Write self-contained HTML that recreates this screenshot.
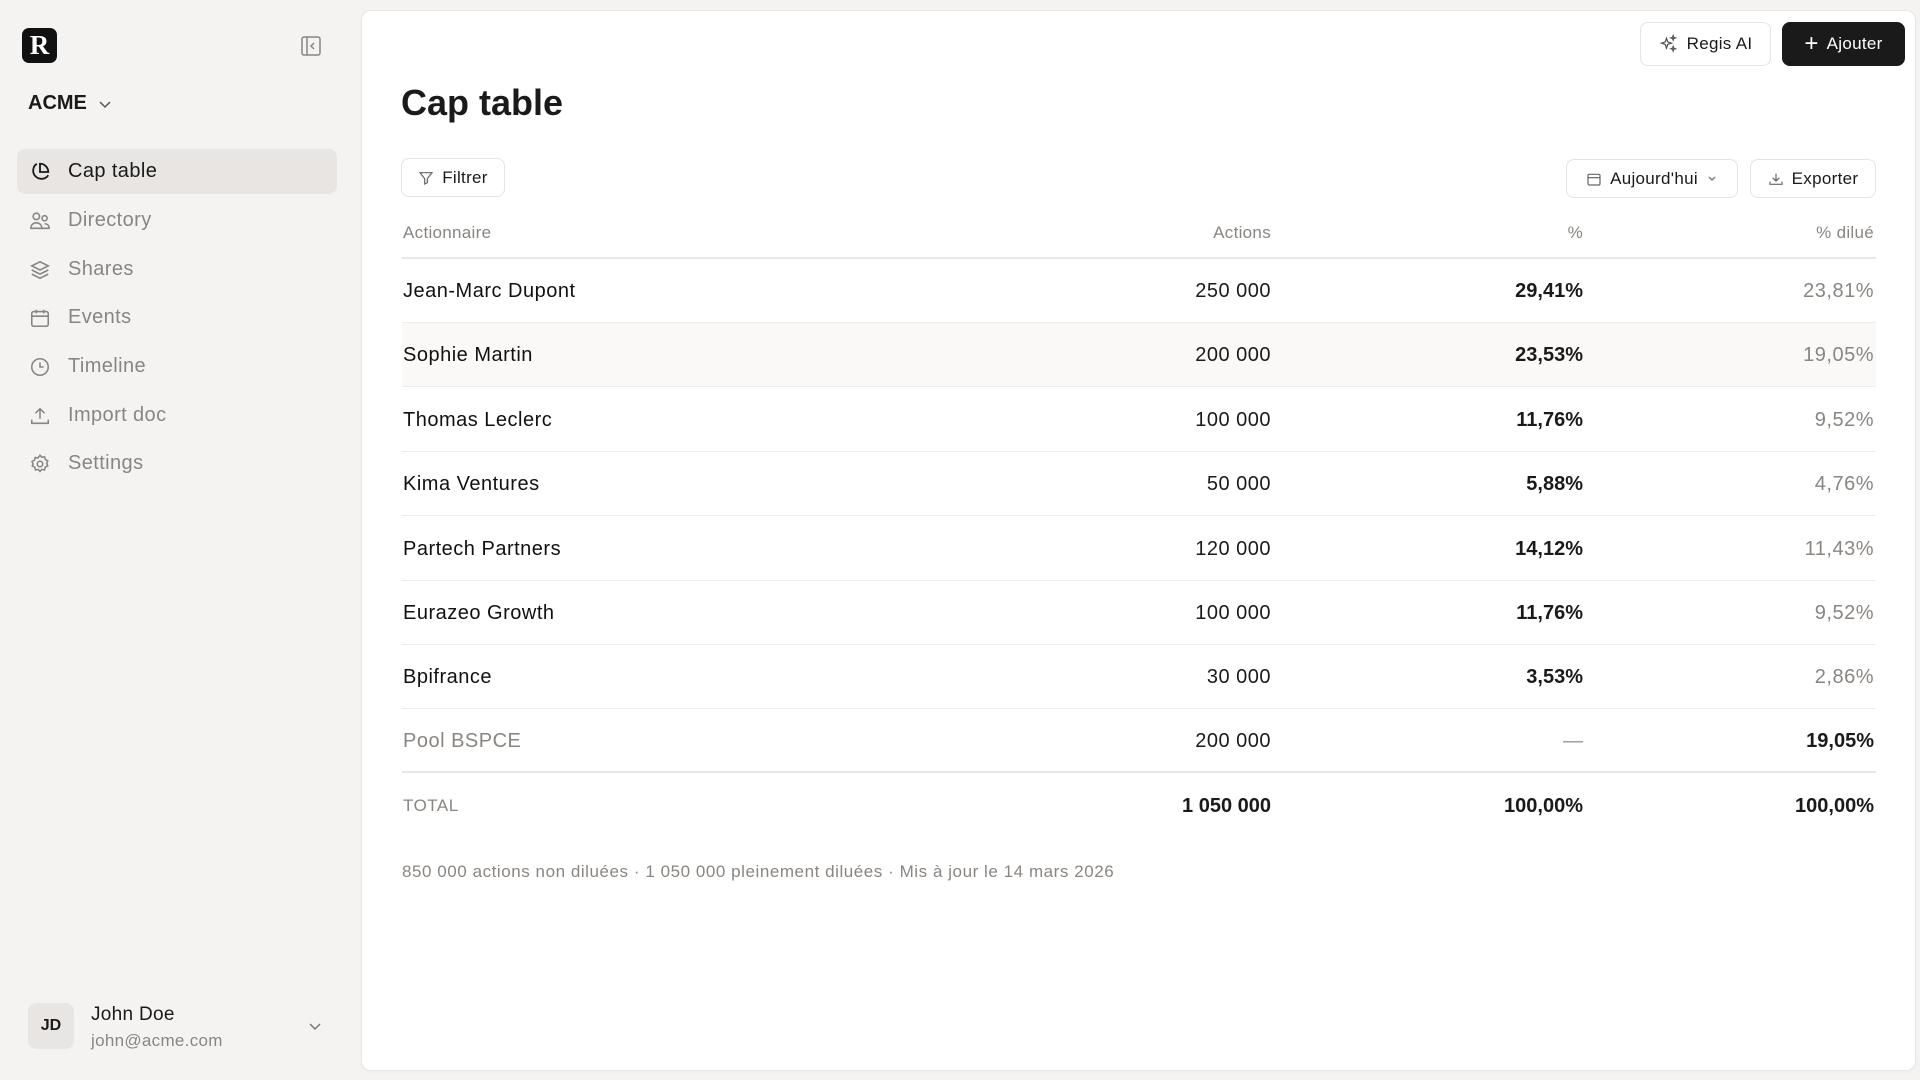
<!DOCTYPE html>
<html><head><meta charset="utf-8">
<style>
*{box-sizing:border-box;margin:0;padding:0}
body{width:1920px;height:1080px;background:#f5f3f1;font-family:"Liberation Sans",sans-serif;color:#1a1a1a;position:relative;overflow:hidden}
.abs{position:absolute}
.logo{left:22px;top:28px;width:35px;height:35px;background:#111;border-radius:7px;color:#fff;font-family:"Liberation Serif",serif;font-weight:bold;font-size:27px;text-align:center;line-height:35px}
.nav{left:17px;width:320px;height:45px;border-radius:8px;display:flex;align-items:center;font-size:20px;color:#8a8580;letter-spacing:.4px}
.nav svg{position:absolute;left:12px;top:12px}
.nav span{position:absolute;left:51px}
.nav.act{background:#e8e5e2;color:#1a1a1a}
.main{left:361px;top:10px;width:1555px;height:1061px;background:#fff;border-radius:10px;border:1px solid #e9e6e3;box-shadow:0 1px 3px rgba(0,0,0,.04)}
.btn{border:1.5px solid #e6e3e0;border-radius:8px;background:#fff;display:flex;align-items:center;justify-content:center;gap:8px;font-size:17px;color:#1a1a1a;letter-spacing:.3px}
.row{left:402px;width:1474px;height:64px;border-bottom:1.5px solid #efedeb;font-size:20px;letter-spacing:.5px}
.row div{position:absolute;top:0;line-height:64px}
.c0{left:1px;color:#111}
.c1{right:605px;text-align:right}
.c2{right:293px;text-align:right;font-weight:bold;letter-spacing:0}
.c3{right:2px;text-align:right;color:#8a8580}
</style></head><body>
<div class="abs logo">R</div>
<svg class="abs" style="left:300px;top:35px" width="22" height="22" viewBox="0 0 22 22" fill="none" stroke="#8a8580" stroke-width="1.5"><rect x="2" y="2" width="18" height="18" rx="2"/><line x1="7" y1="2" x2="7" y2="20"/><path d="M14 8l-3 3 3 3"/></svg>
<div class="abs" style="left:28px;top:92px;font-size:20px;font-weight:bold;">ACME</div>
<svg class="abs" style="left:98px;top:99px" width="14" height="10" viewBox="0 0 14 10" fill="none" stroke="#555" stroke-width="1.5"><path d="M2 3l5 5 5-5"/></svg>

<div class="abs nav act" style="top:149px"><svg width="22" height="22" viewBox="0 0 24 24" fill="none" stroke="#1a1a1a" stroke-width="2"><path d="M21 15.5A9 9 0 1 1 8.5 3"/><path d="M12 3v9h9a9 9 0 0 0-9-9z"/></svg><span>Cap table</span></div>
<div class="abs nav" style="top:198px"><svg width="22" height="22" viewBox="0 0 24 24" fill="none" stroke="#8a8580" stroke-width="1.7"><circle cx="8" cy="7" r="3.5"/><circle cx="17" cy="9" r="2.8"/><path d="M2 20c0-4 3-6 6-6s6 2 6 6z"/><path d="M13 20h9c0-3-2-5-5-5"/></svg><span>Directory</span></div>
<div class="abs nav" style="top:247px"><svg width="22" height="22" viewBox="0 0 24 24" fill="none" stroke="#8a8580" stroke-width="1.7"><path d="M12 3l9 4.5-9 4.5-9-4.5z"/><path d="M3 12l9 4.5 9-4.5"/><path d="M3 16.5l9 4.5 9-4.5"/></svg><span>Shares</span></div>
<div class="abs nav" style="top:295px"><svg width="22" height="22" viewBox="0 0 24 24" fill="none" stroke="#8a8580" stroke-width="1.7"><rect x="3" y="5" width="18" height="16" rx="2"/><path d="M3 10h18M8 3v4M16 3v4"/></svg><span>Events</span></div>
<div class="abs nav" style="top:344px"><svg width="22" height="22" viewBox="0 0 24 24" fill="none" stroke="#8a8580" stroke-width="1.7"><circle cx="12" cy="12" r="9"/><path d="M12 7v5h4"/></svg><span>Timeline</span></div>
<div class="abs nav" style="top:393px"><svg width="22" height="22" viewBox="0 0 24 24" fill="none" stroke="#8a8580" stroke-width="1.7"><path d="M3 16v4h18v-4M12 15V4M7 9l5-5 5 5"/></svg><span>Import doc</span></div>
<div class="abs nav" style="top:441px"><svg width="22" height="22" viewBox="0 0 24 24" fill="none" stroke="#8a8580" stroke-width="1.7"><circle cx="12" cy="12" r="3"/><path d="M12 2.5l2 2.2 3-.5.8 2.9 2.7 1.4-1.2 2.8 1.2 2.8-2.7 1.4-.8 2.9-3-.5-2 2.2-2-2.2-3 .5-.8-2.9-2.7-1.4L4.5 12 3.3 9.2 6 7.8l.8-2.9 3 .5z"/></svg><span>Settings</span></div>

<div class="abs" style="left:28px;top:1003px;width:46px;height:46px;border-radius:8px;background:#e8e5e2;font-size:16px;font-weight:bold;text-align:center;line-height:46px">JD</div>
<div class="abs" style="left:91px;top:1004px;font-size:19px;letter-spacing:.3px">John Doe</div>
<div class="abs" style="left:91px;top:1031px;font-size:17px;color:#8a8580;letter-spacing:.3px">john@acme.com</div>
<svg class="abs" style="left:307px;top:1021px" width="16" height="12" viewBox="0 0 16 12" fill="none" stroke="#777" stroke-width="1.5"><path d="M3 3l5 5 5-5"/></svg>

<div class="abs main"></div>
<div class="abs btn" style="left:1640px;top:22px;width:131px;height:44px"><svg width="20" height="20" viewBox="0 0 24 24" fill="none" stroke="#555" stroke-width="1.5"><path d="M9 5l1.5 4.5L15 11l-4.5 1.5L9 17l-1.5-4.5L3 11l4.5-1.5z"/><path d="M17 2l.7 2 2 .7-2 .7-.7 2-.7-2-2-.7 2-.7zM17 15l.7 2 2 .7-2 .7-.7 2-.7-2-2-.7 2-.7z"/></svg>Regis AI</div>
<div class="abs btn" style="left:1782px;top:22px;width:123px;height:44px;background:#1a1a1a;border-color:#1a1a1a;color:#fff"><span style="font-size:24px;font-weight:300;line-height:1">+</span>Ajouter</div>
<div class="abs" style="left:401px;top:82px;font-size:36px;font-weight:bold;letter-spacing:0">Cap table</div>

<div class="abs btn" style="left:401px;top:158px;width:104px;height:39px"><svg width="16" height="16" viewBox="0 0 24 24" fill="none" stroke="#666" stroke-width="1.8"><path d="M3 4h18l-7 9v6l-4 2v-8z"/></svg>Filtrer</div>
<div class="abs btn" style="left:1566px;top:159px;width:172px;height:39px"><svg width="16" height="16" viewBox="0 0 24 24" fill="none" stroke="#666" stroke-width="1.8"><rect x="3" y="5" width="18" height="16" rx="2"/><path d="M3 10h18"/></svg>Aujourd'hui<svg width="12" height="10" viewBox="0 0 12 10" fill="none" stroke="#777" stroke-width="1.4"><path d="M3 3l3 3 3-3"/></svg></div>
<div class="abs btn" style="left:1750px;top:159px;width:126px;height:39px"><svg width="16" height="16" viewBox="0 0 24 24" fill="none" stroke="#666" stroke-width="1.8"><path d="M3 16v4h18v-4M12 4v11M7 10l5 5 5-5"/></svg>Exporter</div>

<div class="abs" style="left:402px;top:223px;width:1474px;height:36px;border-bottom:2px solid #e9e7e5;font-size:17px;color:#8a8580;letter-spacing:.3px">
<div class="abs" style="left:1px">Actionnaire</div>
<div class="abs" style="right:605px">Actions</div>
<div class="abs" style="right:293px">%</div>
<div class="abs" style="right:2px">% dilué</div>
</div>

<div class="abs row" style="top:259px"><div class="c0">Jean-Marc Dupont</div><div class="c1">250 000</div><div class="c2">29,41%</div><div class="c3">23,81%</div></div>
<div class="abs row" style="top:323px;background:#faf9f8"><div class="c0">Sophie Martin</div><div class="c1">200 000</div><div class="c2">23,53%</div><div class="c3">19,05%</div></div>
<div class="abs row" style="top:388px"><div class="c0">Thomas Leclerc</div><div class="c1">100 000</div><div class="c2">11,76%</div><div class="c3">9,52%</div></div>
<div class="abs row" style="top:452px"><div class="c0">Kima Ventures</div><div class="c1">50 000</div><div class="c2">5,88%</div><div class="c3">4,76%</div></div>
<div class="abs row" style="top:517px"><div class="c0">Partech Partners</div><div class="c1">120 000</div><div class="c2">14,12%</div><div class="c3">11,43%</div></div>
<div class="abs row" style="top:581px"><div class="c0">Eurazeo Growth</div><div class="c1">100 000</div><div class="c2">11,76%</div><div class="c3">9,52%</div></div>
<div class="abs row" style="top:645px"><div class="c0">Bpifrance</div><div class="c1">30 000</div><div class="c2">3,53%</div><div class="c3">2,86%</div></div>
<div class="abs row" style="top:709px;border-bottom:2px solid #e9e7e5"><div class="c0" style="color:#8a8580">Pool BSPCE</div><div class="c1">200 000</div><div class="c2" style="color:#999;font-weight:normal">—</div><div class="c3" style="color:#1a1a1a;font-weight:bold;letter-spacing:0">19,05%</div></div>
<div class="abs row" style="top:774px;border:none"><div class="c0" style="font-size:17px;color:#8a8580">TOTAL</div><div class="c1" style="font-weight:bold;letter-spacing:0">1 050 000</div><div class="c2">100,00%</div><div class="c3" style="color:#1a1a1a;font-weight:bold;letter-spacing:0">100,00%</div></div>

<div class="abs" style="left:402px;top:862px;font-size:17px;color:#8a8580;letter-spacing:.55px">850 000 actions non diluées · 1 050 000 pleinement diluées · Mis à jour le 14 mars 2026</div>
</body></html>
